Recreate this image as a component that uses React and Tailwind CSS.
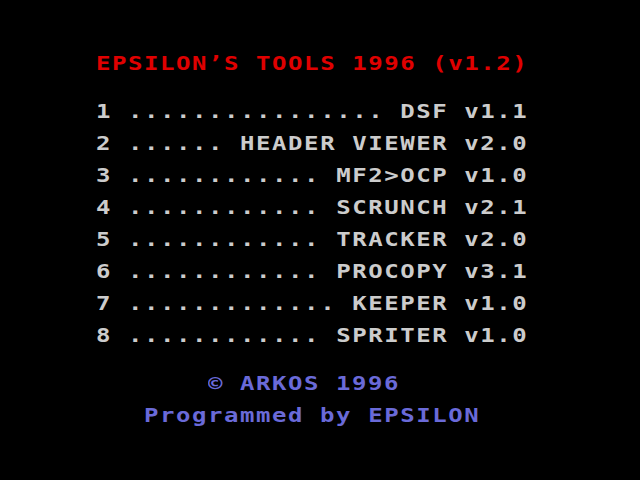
export default function App() {
  const rows = [
    "1 ................ DSF v1.1",
    "2 ...... HEADER VIEWER v2.0",
    "3 ............ MF2>OCP v1.0",
    "4 ............ SCRUNCH v2.1",
    "5 ............ TRACKER v2.0",
    "6 ............ PROCOPY v3.1",
    "7 ............. KEEPER v1.0",
    "8 ............ SPRITER v1.0",
  ];
  const font = {
    fontFamily: '"DejaVu Sans Mono", "Liberation Mono", monospace',
  };
  const line = "h-[32px] origin-left scale-x-[1.2]";
  return (
    <div
      className="w-[640px] h-[480px] bg-black overflow-hidden pt-[47px] font-bold text-[20px] leading-[32px] tracking-[1.3px] whitespace-pre"
      style={font}
    >
      <div className="pl-[96px]">
        <div className={line + " text-[#e00000]"}>EPSILON’S TOOLS 1996 (v1.2)</div>
      </div>
      <div className="mt-[16px] flex flex-col text-[#cccccc]">
        {rows.map((r) => (
          <div key={r} className="pl-[96px]">
            <div className={line}>{r}</div>
          </div>
        ))}
      </div>
      <div className="mt-[16px] flex flex-col text-[#6a6ad8]">
        <div className="pl-[208px]">
          <div className={line}>© ARKOS 1996</div>
        </div>
        <div className="pl-[144px]">
          <div className={line}>Programmed by EPSILON</div>
        </div>
      </div>
    </div>
  );
}
